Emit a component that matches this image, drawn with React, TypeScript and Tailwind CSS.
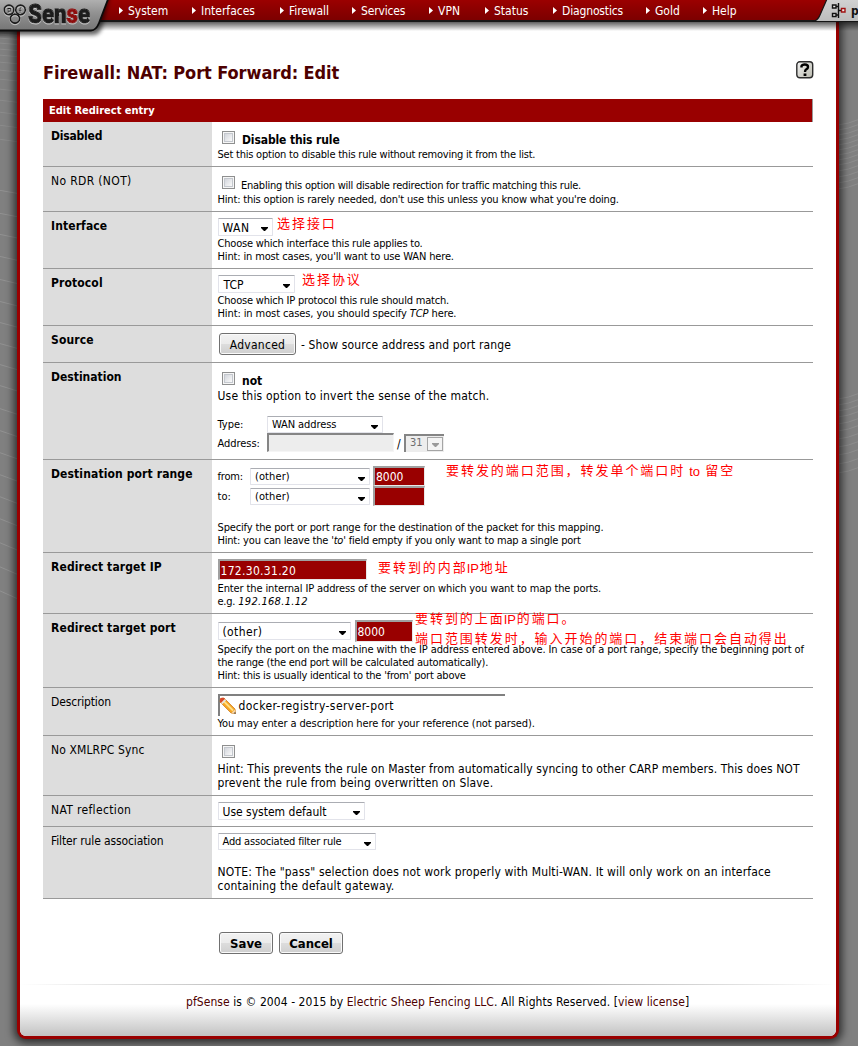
import React from "react";

type Kids = { children?: React.ReactNode };

const small = "h-[13px] leading-[13px] text-[11px] whitespace-nowrap";
const cjk = "font-['Liberation_Sans','Noto_Sans_CJK_SC',sans-serif]";

function Row({
  label,
  bold,
  height,
  pad,
  track = "tracking-[0.12px]",
  children,
}: Kids & { label: string; bold?: boolean; height: string; pad: string; track?: string }) {
  return (
    <div className={`relative flex border-b border-[#999999] ${height}`}>
      <div
        className={`w-[169px] shrink-0 bg-[#dddddd] pt-[7px] pl-[8px] text-[12px] leading-[15px] whitespace-nowrap ${track} ${
          bold ? "font-bold" : ""
        }`}
      >
        {label}
      </div>
      <div className={`flex-1 pl-[5.5px] ${pad}`}>{children}</div>
    </div>
  );
}

function Small({ children, track = "tracking-[-0.22px]" }: Kids & { track?: string }) {
  return <div className={`${small} ${track}`}>{children}</div>;
}

function Check() {
  return (
    <span className="ml-[4.5px] flex h-[13px] w-[13px] shrink-0 items-center justify-center border border-[#8e8f8f] bg-[#f6f6f6]">
      <span className="h-[9px] w-[9px] border border-[#c4c8ce] bg-gradient-to-br from-[#d3d6dc] to-[#fafafa]" />
    </span>
  );
}

function Select({ children, box, text = "text-[12px]" }: Kids & { box: string; text?: string }) {
  return (
    <span
      className={`flex shrink-0 items-center justify-between rounded-[1px] border border-[#e2e3ea] border-t-[#abadb3] bg-white pr-[4px] pl-[4px] whitespace-nowrap ${box} ${text}`}
    >
      <span className="pt-[2px]">{children}</span>
      <svg width="7" height="4" viewBox="0 0 7 4" className="mt-[4px] shrink-0">
        <path d="M0 0h7v1L4 4H3L0 1z" fill="#000" />
      </svg>
    </span>
  );
}

function Field({ children, box }: Kids & { box: string }) {
  return (
    <span
      className={`flex shrink-0 items-center border-t-[2px] border-r border-b border-l-[2px] border-t-[#a0a0a0] border-r-[#e9e9e9] border-b-[#e9e9e9] border-l-[#a0a0a0] bg-[#990000] pl-[1px] text-[12px] whitespace-nowrap text-white ${box}`}
    >
      {children}
    </span>
  );
}

function Button({ children, box }: Kids & { box: string }) {
  return (
    <button
      className={`flex h-[22px] shrink-0 items-center justify-center rounded-[3px] border border-[#707070] bg-[linear-gradient(#f2f2f2,#ebebeb_48%,#dddddd_50%,#cfcfcf)] pt-[1px] shadow-[inset_0_0_0_1px_#fafafa] whitespace-nowrap ${box}`}
    >
      {children}
    </button>
  );
}

function Note({ children, at }: Kids & { at: string }) {
  return (
    <div
      className={`absolute h-[16px] text-[13px] leading-[16px] tracking-[1.95px] whitespace-nowrap text-[#ff0000] ${cjk} ${at}`}
    >
      {children}
    </div>
  );
}

function Ip() {
  return <span className="relative top-[1px] ml-[-1px] inline-block w-[13px] tracking-[0px]">IP</span>;
}

const menu: [string, string][] = [
  ["System", "w-[73px]"],
  ["Interfaces", "w-[88px]"],
  ["Firewall", "w-[72px] tracking-[-0.1px]"],
  ["Services", "w-[77px] tracking-[-0.15px]"],
  ["VPN", "w-[56px]"],
  ["Status", "w-[68px]"],
  ["Diagnostics", "w-[93px] tracking-[-0.15px]"],
  ["Gold", "w-[57px]"],
  ["Help", "w-[60px]"],
];

function Logo() {
  return (
    <svg className="absolute top-0 left-0" width="116" height="42" viewBox="0 0 116 42">
      <defs>
        <linearGradient id="tab" x1="0" y1="0" x2="0" y2="1">
          <stop offset="0" stopColor="#b4b4b4" />
          <stop offset="0.45" stopColor="#929292" />
          <stop offset="1" stopColor="#757575" />
        </linearGradient>
        <filter id="soft" x="-20%" y="-20%" width="140%" height="150%">
          <feGaussianBlur stdDeviation="2" />
        </filter>
        <filter id="glow">
          <feDropShadow dx="0" dy="1" stdDeviation="0.7" floodColor="#d6d6d6" floodOpacity="0.8" />
        </filter>
      </defs>
      <path d="M-5-4H110L102 27Q100 35 93 35H-5z" fill="#000" opacity="0.6" filter="url(#soft)" />
      <path d="M-2-2H108.500L99 23Q96 30.500 91 30.500H-2z" fill="url(#tab)" stroke="#0c0c0c" strokeWidth="1.800" />
      <g filter="url(#glow)">
        <g fill="none" stroke="#1d1d1d" strokeWidth="1.900">
          <circle cx="9" cy="10" r="4.700" />
          <circle cx="20.500" cy="10" r="4.700" />
          <circle cx="15" cy="18.700" r="4.500" />
        </g>
        <path
          d="M8 13V8.500h2.300v2.700H8M20 13V9q0-1.300 1.500-1.200M18.800 10.200h2.600"
          fill="none"
          stroke="#1d1d1d"
          strokeWidth="1.100"
        />
        <text
          x="28"
          y="23"
          fontFamily="Roboto, sans-serif"
          fontWeight="900"
          fontSize="26"
          fill="#1b1b1b"
          stroke="#1b1b1b"
          strokeWidth="1"
          textLength="62"
          lengthAdjust="spacingAndGlyphs"
        >
          Sen
          <tspan fill="#8e0b0b" stroke="#8e0b0b">
            s
          </tspan>
          e
        </text>
      </g>
    </svg>
  );
}

function HostTab() {
  return (
    <svg className="absolute top-0 right-0" width="46" height="24" viewBox="812 0 46 24">
      <defs>
        <linearGradient id="host" x1="0" y1="0" x2="0" y2="1">
          <stop offset="0" stopColor="#d2d2d2" />
          <stop offset="1" stopColor="#bcbcbc" />
        </linearGradient>
      </defs>
      <path d="M827-1L820 15Q817.500 21.500 812 21.500H862V-1z" fill="url(#host)" stroke="#151515" strokeWidth="1.200" />
      <g fill="#eee" stroke="#111" strokeWidth="1.400">
        <path d="M838.500 3v15M836 6.500h2M836 15h2M838.500 10.500h4" fill="none" />
        <path d="M832.500 5h3.500v3h-3.500zM832.500 13.500h3.500v3h-3.500z" />
        <path d="M841.500 8.500h3.500v3.500h-3.500z" stroke="#a01010" />
      </g>
      <text x="851" y="15" fontFamily="DejaVu Sans Condensed, sans-serif" fontWeight="700" fontSize="12" fill="#111">
        p
      </text>
    </svg>
  );
}

const leftStreaks = [
  34, 38, 43, 49, 55, 62, 70, 79, 89, 100, 112, 125, 139, 190, 213, 234, 256, 279, 301, 322, 343, 364, 385, 408, 430,
  452, 474, 496, 518, 542, 566, 590,
];
const rightStreaks = [
  122, 127, 132, 137, 142, 147, 152, 157, 162, 168, 174, 180, 186, 396, 402, 408, 414, 421, 428, 436, 444, 452, 461, 470,
];

function Backdrop() {
  return (
    <svg className="absolute top-0 left-0" width="858" height="1046" viewBox="0 0 858 1046">
      <g fill="none" stroke="#a6a6a6" strokeWidth="1">
        {leftStreaks.map((y) => (
          <path key={y} d={`M-2 ${y}L19 ${y + 1 + y / 70}`} opacity={y < 145 ? 0.3 : 0.45} />
        ))}
        {rightStreaks.map((y) => (
          <path key={y} d={`M838 ${y + 3}Q848 ${y + 2} 860 ${y - 3}`} opacity="0.35" />
        ))}
      </g>
    </svg>
  );
}

export default function App() {
  return (
    <div className="relative flex h-[1046px] w-[858px] flex-col overflow-hidden bg-[#808080] font-['DejaVu_Sans_Condensed','Noto_Sans_CJK_SC',sans-serif] text-[12px] text-black">
      <Backdrop />

      <header className="relative z-10 flex h-[22px] shrink-0 border-b-2 border-[#181818] bg-gradient-to-b from-[#9b0000] to-[#7c0000] pl-[119px]">
        <nav className="flex h-[21px] items-center">
          {menu.map(([name, width]) => (
            <a key={name} className={`flex items-center gap-[5px] text-white ${width}`}>
              <svg width="4" height="7" viewBox="0 0 4 7" className="shrink-0">
                <path d="M0 0L4 3.500L0 7z" fill="#fff" />
              </svg>
              {name}
            </a>
          ))}
        </nav>
        <div className="absolute top-[22px] left-0 h-[9px] w-full bg-gradient-to-b from-[#000000a0] to-transparent" />
        <Logo />
        <HostTab />
      </header>

      <main className="relative ml-[17px] flex h-[1017px] w-[822px] shrink-0 flex-col rounded-b-[9px] border-x-[3px] border-b-[3px] border-[#990000] bg-white px-[23px] shadow-[0_1px_9px_3px_rgba(0,0,0,0.65)]">
        <div className="flex h-[77px] items-center justify-between pt-[24px]">
          <h1 className="text-[18px] font-bold tracking-[-0.08px] text-[#4d0000]">Firewall: NAT: Port Forward: Edit</h1>
          <svg width="18" height="18" viewBox="0 0 18 18" className="mr-[-1px] mb-[5px]">
            <defs>
              <linearGradient id="help" x1="0" y1="0" x2="1" y2="1">
                <stop offset="0" stopColor="#f4f4f4" />
                <stop offset="1" stopColor="#b9b9ad" />
              </linearGradient>
            </defs>
            <rect x="0.800" y="0.800" width="15.900" height="16" rx="3" fill="url(#help)" stroke="#2c2c2c" strokeWidth="1.400" />
            <path
              d="M5.500 6.500V5.200Q6 3.500 8.800 3.500Q12 3.500 12 6Q12 7.500 10.300 8.300Q9 9 9 11"
              fill="none"
              stroke="#000"
              strokeWidth="2.400"
            />
            <path d="M7.600 12.500h2.800v2.500H7.600z" fill="#000" />
          </svg>
        </div>

        <section className="flex w-[770px] flex-col">
          <h2 className="h-[23px] border-r border-[#999999] bg-[#990000] pl-[6px] text-[11px] leading-[24px] font-bold text-white">
            Edit Redirect entry
          </h2>

          <Row label="Disabled" bold height="h-[45px]" pad="pt-[9px]" track="tracking-[-0.2px]">
            <div className="flex h-[17px]">
              <Check />
              <b className="mt-[2px] ml-[7px] leading-[15px] tracking-[-0.12px]">Disable this rule</b>
            </div>
            <Small>Set this option to disable this rule without removing it from the list.</Small>
          </Row>

          <Row label="No RDR (NOT)" height="h-[45px]" pad="pt-[9px]" track="tracking-[0.35px]">
            <div className="flex h-[17px]">
              <Check />
              <span className="mt-[3px] ml-[6px] text-[11px] leading-[14px] tracking-[-0.24px] whitespace-nowrap">
                Enabling this option will disable redirection for traffic matching this rule.
              </span>
            </div>
            <Small track="tracking-[-0.18px]">
              Hint: this option is rarely needed, don't use this unless you know what you're doing.
            </Small>
          </Row>

          <Row label="Interface" bold height="h-[57px]" pad="pt-[6px]">
            <div className="flex h-[19px]">
              <Select box="h-[18px] w-[55px]" text="text-[12px] tracking-[0.6px]">
                WAN
              </Select>
            </div>
            <Small track="tracking-[-0.2px]">Choose which interface this rule applies to.</Small>
            <Small track="tracking-[-0.15px]">Hint: in most cases, you'll want to use WAN here.</Small>
            <Note at="left-[234px] top-[4px]">选择接口</Note>
          </Row>

          <Row label="Protocol" bold height="h-[57px]" pad="pt-[6px]">
            <div className="flex h-[19px]">
              <Select box="h-[18px] w-[77px]" text="text-[12px] indent-[1px]">
                TCP
              </Select>
            </div>
            <Small track="tracking-[-0.2px]">Choose which IP protocol this rule should match.</Small>
            <Small track="tracking-[-0.1px]">
              Hint: in most cases, you should specify <i>TCP</i> here.
            </Small>
            <Note at="left-[259px] top-[3px]">选择协议</Note>
          </Row>

          <Row label="Source" bold height="h-[37px]" pad="pt-[7px]">
            <div className="flex items-center pl-[1.500px]">
              <Button box="w-[77px] tracking-[0.25px]">Advanced</Button>
              <span className="ml-[5px] pt-[2px] tracking-[0.12px] whitespace-nowrap">
                - Show source address and port range
              </span>
            </div>
          </Row>

          <Row label="Destination" bold height="h-[97px]" pad="pt-[9px]" track="tracking-[0px]">
            <div className="flex h-[17px]">
              <Check />
              <b className="mt-[2px] ml-[7px] leading-[15px]">not</b>
            </div>
            <div className="h-[27px] leading-[14px] tracking-[0.2px]">Use this option to invert the sense of the match.</div>
            <div className="flex h-[17px] items-center text-[11px]">
              <span className="w-[49.500px] pt-[2px]">Type:</span>
              <Select box="h-[17px] w-[116px]" text="text-[11px] tracking-[-0.1px]">
                WAN address
              </Select>
            </div>
            <div className="flex h-[19px] items-center text-[11px]">
              <span className="w-[49.500px] pt-[4px] tracking-[-0.05px]">Address:</span>
              <span className="h-[19px] w-[127px] border-t-2 border-r border-b border-l-2 border-t-[#858585] border-r-[#f5f5f5] border-b-[#f5f5f5] border-l-[#858585] bg-[#ededed]" />
              <span className="w-[10px] pt-[2px] pl-[3px] text-[12px]">/</span>
              <span className="flex h-[18px] w-[40px] items-center justify-between border-t-2 border-l-2 border-[#858585] bg-[#ededed] pl-[4px] text-[11px] text-[#6d6d6d]">
                31
                <span className="mr-[1px] flex h-[14px] w-[16px] items-center justify-center border border-[#a5a5a5] bg-[#f4f4f4]">
                  <svg width="7" height="4" viewBox="0 0 7 4" className="mt-[3px]">
                    <path d="M0 0h7v1L4 4H3L0 1z" fill="#9a9a9a" />
                  </svg>
                </span>
              </span>
            </div>
          </Row>

          <Row label="Destination port range" bold height="h-[93px]" pad="pt-[6px]">
            <div className="flex h-[20px] items-center text-[11px]">
              <span className="w-[32.500px] pt-[3px] tracking-[-0.2px]">from:</span>
              <Select box="mt-[1px] h-[17px] w-[120px]" text="text-[11px] tracking-[0.1px]">
                (other)
              </Select>
              <Field box="ml-[3px] h-[20px] w-[52px]">8000</Field>
            </div>
            <div className="flex h-[35px] items-start text-[11px]">
              <span className="w-[32.500px] pt-[3px]">to:</span>
              <Select box="mt-[2px] h-[17px] w-[120px]" text="text-[11px] tracking-[0.1px]">
                (other)
              </Select>
              <Field box="ml-[3px] h-[20px] w-[52px]" />
            </div>
            <Small track="tracking-[-0.15px]">
              Specify the port or port range for the destination of the packet for this mapping.
            </Small>
            <Small track="tracking-[-0.2px]">
              Hint: you can leave the <i>'to'</i> field empty if you only want to map a single port
            </Small>
            <Note at="left-[403px] top-[3px]">
              要转发的端口范围，转发单个端口时
              <span className="relative top-[1px] inline-block w-[20px] pl-[4px] tracking-[0px]">to</span>
              留空
            </Note>
          </Row>

          <Row label="Redirect target IP" bold height="h-[61px]" pad="pt-[6px]">
            <div className="flex h-[23px]">
              <Field box="h-[21px] w-[149px]">
                <span className="pt-[2px] tracking-[0.3px]">172.30.31.20</span>
              </Field>
            </div>
            <Small track="tracking-[-0.12px]">
              Enter the internal IP address of the server on which you want to map the ports.
            </Small>
            <Small>
              e.g. <i className="tracking-[0.3px]">192.168.1.12</i>
            </Small>
            <Note at="left-[335px] top-[7px]">
              要转到的内部
              <Ip />
              地址
            </Note>
          </Row>

          <Row label="Redirect target port" bold height="h-[74px]" pad="pt-[6px]">
            <div className="flex h-[23px]">
              <Select box="mt-[2px] h-[18px] w-[133px]" text="text-[12px] tracking-[0.4px]">
                (other)
              </Select>
              <Field box="ml-[4px] h-[22px] w-[58px]">8000</Field>
            </div>
            <Small track="tracking-[-0.11px]">
              Specify the port on the machine with the IP address entered above. In case of a port range, specify the beginning
              port of
            </Small>
            <Small track="tracking-[-0.22px]">the range (the end port will be calculated automatically).</Small>
            <Small track="tracking-[-0.22px]">Hint: this is usually identical to the 'from' port above</Small>
            <Note at="left-[372px] top-[-3px]">
              要转到的上面
              <Ip />
              的端口。
            </Note>
            <Note at="left-[372px] top-[17px]">端口范围转发时，输入开始的端口，结束端口会自动得出</Note>
          </Row>

          <Row label="Description" height="h-[48px]" pad="pt-[6px]" track="tracking-[-0.15px]">
            <div className="flex h-[23px]">
              <span className="flex h-[22px] w-[287px] items-center border-t-2 border-l-2 border-[#808080] bg-white">
                <svg width="18" height="18" viewBox="0 0 18 18" className="ml-[-1px] shrink-0">
                  <path
                    d="M1.500 1.500L5 1L16 12L16.500 16.500L12 16L1 5z"
                    fill="#f5a623"
                    stroke="#c9761a"
                    strokeWidth="0.700"
                  />
                  <path d="M3.500 3L14 13.500" stroke="#ffdf85" strokeWidth="1.800" />
                  <path d="M1.200 1.800Q2.500 0 5 1L6 2L2 6L1 5z" fill="#d9482b" />
                  <path d="M6 2L2 6L3.200 7.200L7.200 3.200z" fill="#e3e3e3" />
                  <path d="M15.800 12.500L16.500 16.500L12.500 15.800z" fill="#f4d6a8" />
                  <path d="M16.100 15L16.700 16.700L15 16.200z" fill="#222" />
                </svg>
                <span className="ml-[2px] tracking-[0.43px] whitespace-nowrap">docker-registry-server-port</span>
              </span>
            </div>
            <Small track="tracking-[-0.1px]">You may enter a description here for your reference (not parsed).</Small>
          </Row>

          <Row label="No XMLRPC Sync" height="h-[60px]" pad="pt-[9px]">
            <div className="flex h-[17px]">
              <Check />
            </div>
            <div className="h-[14px] leading-[14px] tracking-[0.085px] whitespace-nowrap">
              Hint: This prevents the rule on Master from automatically syncing to other CARP members. This does NOT
            </div>
            <div className="h-[14px] leading-[14px] tracking-[0.15px]">prevent the rule from being overwritten on Slave.</div>
          </Row>

          <Row label="NAT reflection" height="h-[31px]" pad="pt-[6px]" track="tracking-[0.35px]">
            <div className="flex">
              <Select box="h-[18px] w-[147px]">Use system default</Select>
            </div>
          </Row>

          <Row label="Filter rule association" height="h-[72px]" pad="pt-[6px]" track="tracking-[-0.12px]">
            <div className="flex h-[32px]">
              <Select box="h-[17px] w-[158px]" text="text-[11px] tracking-[-0.18px]">
                Add associated filter rule
              </Select>
            </div>
            <div className="h-[14px] leading-[14px] tracking-[0.165px] whitespace-nowrap">
              NOTE: The "pass" selection does not work properly with Multi-WAN. It will only work on an interface
            </div>
            <div className="h-[14px] leading-[14px] tracking-[0.2px]">containing the default gateway.</div>
          </Row>
        </section>

        <div className="flex h-[85px] gap-[6px] pt-[33px] pl-[176px]">
          <Button box="w-[54px] text-[13px] font-bold">Save</Button>
          <Button box="w-[64px] text-[13px] font-bold">Cancel</Button>
        </div>

        <footer className="mx-[-23px] flex flex-1 flex-col rounded-b-[6px] bg-[linear-gradient(#ffffff_20px,#c2c2c2)]">
          <div className="h-px bg-gradient-to-r from-white via-[#888888] to-white" />
          <p className="pt-[9px] pl-[166px] leading-[16px] tracking-[0.07px] whitespace-nowrap">
            <a className="text-[#4d0000]">pfSense</a> is © 2004 - 2015 by{" "}
            <a className="text-[#4d0000]">Electric Sheep Fencing LLC</a>. All Rights Reserved. [
            <a className="text-[#4d0000]">view license</a>]
          </p>
        </footer>
      </main>
    </div>
  );
}
